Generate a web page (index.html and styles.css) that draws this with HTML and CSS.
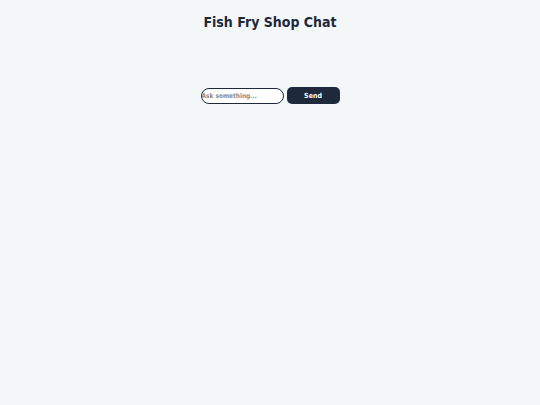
FILE: index.html
```html
<!DOCTYPE html>
<html lang="en">

<head>
    <meta charset="UTF-8">
    <meta name="viewport" content="width=device-width, initial-scale=1.0">
    <title>Fish Fry Shop Chat</title>
    <link rel="stylesheet" href="styles.css">
</head>

<body>
    <h1 class="title">Fish Fry Shop Chat</h1>

    <div class="chat-log"></div>

    <form class="chat-form">
        <input class="chat-input" type="text" placeholder="Ask something...">
        <button class="chat-send" type="button">Send</button>
    </form>
</body>

</html>
```

FILE: styles.css
```css
body {
    margin: 0;
    background: #f3f7f8;
    font-family: "DejaVu Sans Condensed", "DejaVu Sans", sans-serif;
    color: #1e293b;
}

.title {
    margin: 12px 0 0;
    font-size: 14px;
    font-weight: bold;
    text-align: center;
    line-height: 20px;
}

.chat-log {
    height: 55px;
}

.chat-form {
    display: flex;
    justify-content: center;
    align-items: center;
    gap: 3px;
}

.chat-input {
    box-sizing: border-box;
    width: 83px;
    height: 16px;
    padding: 0;
    border: 1.5px solid #1e293b;
    border-radius: 8px;
    background: #fff;
    font-family: "DejaVu Sans Condensed", "DejaVu Sans", sans-serif;
    font-size: 6.5px;
    font-weight: bold;
}

.chat-input::placeholder {
    color: #888;
}

.chat-send {
    box-sizing: border-box;
    width: 53px;
    height: 17px;
    border: none;
    border-radius: 5px;
    background: #1e293b;
    color: #fff;
    font-family: "DejaVu Sans Condensed", "DejaVu Sans", sans-serif;
    font-size: 7px;
    font-weight: bold;
}
```
